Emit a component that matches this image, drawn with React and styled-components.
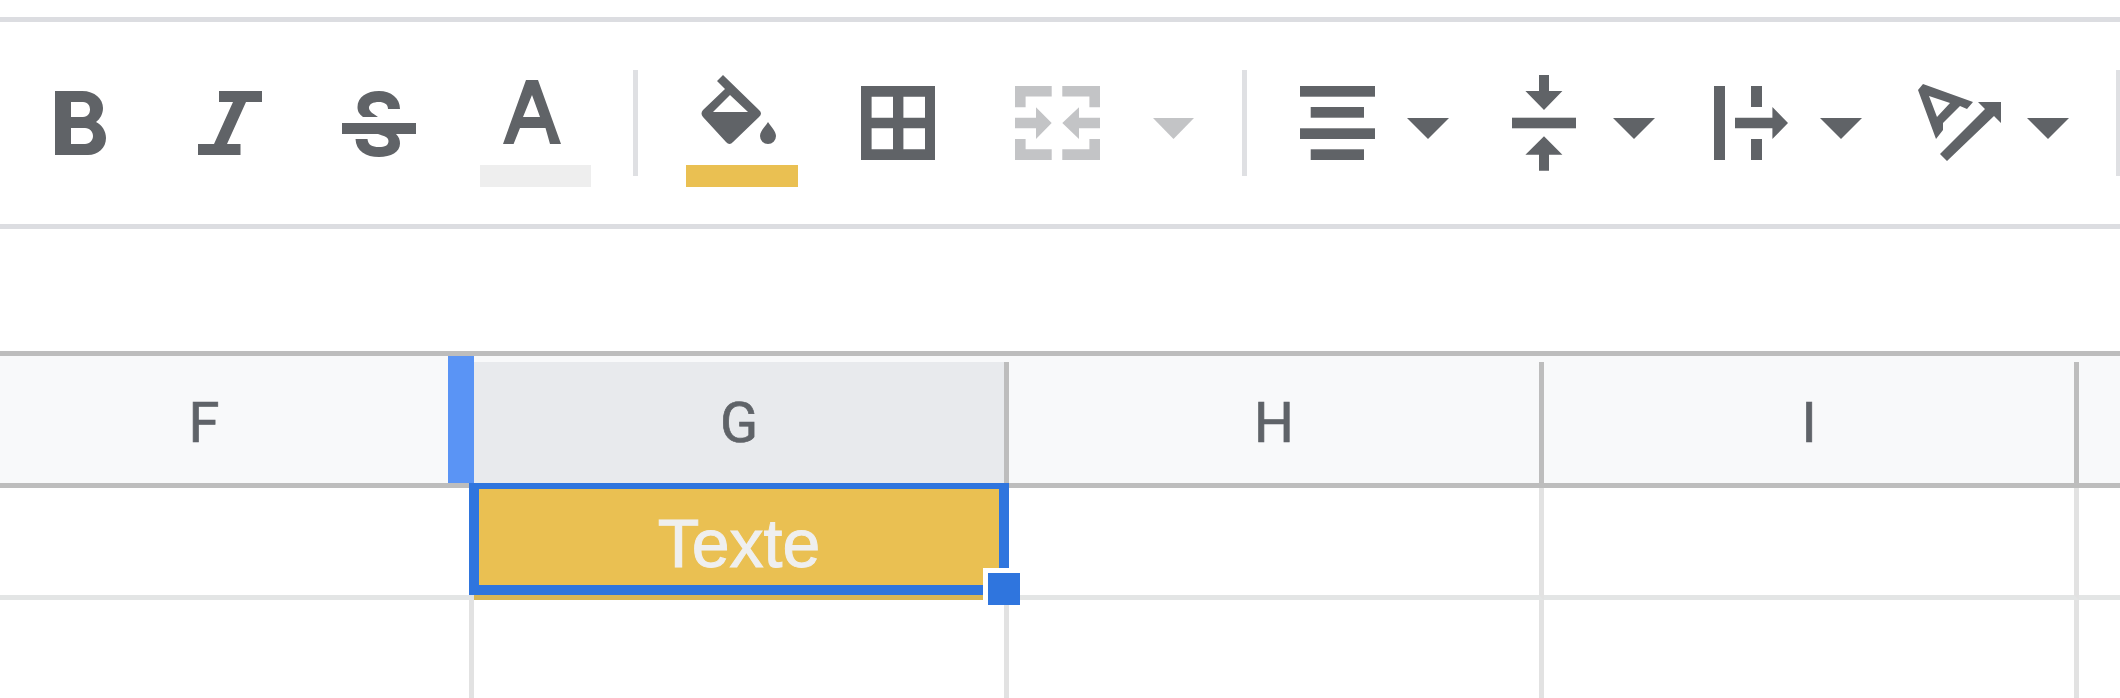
import React from 'react'
import styled, { createGlobalStyle } from 'styled-components'

const INK = '#606367'
const MUTED = '#c3c4c6'
const COLUMNS = ['F', 'G', 'H', 'I', '']

const Caret = ({ off }) => (
  <Glyph width={off ? 41 : 42} height={95} viewBox={off ? '0 0 41 95' : '0 0 42 95'}>
    <polygon fill={off ? MUTED : INK} points={off ? '0,48 41,48 20.5,69' : '0,48 42,48 21,69'} />
  </Glyph>
)

const BoldIcon = () => (
  <Glyph width={51} height={95} viewBox="0 0 51 95">
    <path
      fill={INK}
      fillRule="evenodd"
      d="M0 21H27C40 21 48 29 48 38C48 44 45 49 41 52C47 55 51 61 51 68C51 78 43 85 33 85H0ZM16 32V47H28C33 47 35 43 35 39.5C35 36 33 32 28 32ZM16 58V74H30C35 74 38 70 38 66C38 62 35 58 30 58Z"
    />
  </Glyph>
)

const ItalicIcon = () => (
  <Glyph width={64} height={95} viewBox="0 0 64 95">
    <polygon fill={INK} points="21,21 64,21 64,32 48,32 29,74 42.5,74 42.5,85 0,85 0,74 16,74 35,32 21,32" />
  </Glyph>
)

const StrikeIcon = () => (
  <Glyph width={74} height={95} viewBox="0 0 74 95">
    <g fill={INK}>
      <rect x="0" y="53" width="74" height="11" />
      <path d="M58 39H46C46 34 42 32 37 32C31 32 27 34 27 38C27 41 30 43 36 47H21C17 44 15.5 41 15.5 37C15.5 27 25 21 37 21C49 21 58 28 58 39Z" />
      <path d="M36 64H54C57 67 58 70 58 73.5C58 82 49 87 37 87C24 87 14 81 13.5 69H25.5C26 75 30 77 37 77C43 77 46.5 75.5 46.5 71C46.5 67 42 66 36 64Z" />
    </g>
  </Glyph>
)

const TextColorIcon = () => (
  <Glyph width={111} height={95} viewBox="0 0 111 95">
    <path
      transform="translate(23 0)"
      fill={INK}
      fillRule="evenodd"
      d="M23 10H35L58 74H47L42.5 58H17L10.6 74H0ZM29 25L20 47H37Z"
    />
  </Glyph>
)

const FillIcon = () => (
  <Glyph width={112} height={95} viewBox="0 0 112 95">
    <g transform="translate(15 0)" fill={INK}>
      <path
        fillRule="evenodd"
        d="M22 5L58 40Q62 43.500 58 47L32 72Q28.600 76 25 72L2 47Q-1 43.500 2 40L24 19L16 11ZM29 25L12 42H47Z"
      />
      <path d="M67 52C70 57 75 61 75 66A8 8 0 0 1 59 66C59 61 64 57 67 52Z" />
    </g>
  </Glyph>
)

const BordersIcon = () => (
  <Glyph width={74} height={95} viewBox="0 0 74 95">
    <path
      fill={INK}
      fillRule="evenodd"
      d="M0 16H74V90H0ZM10.600 26.700V47.700H32V26.700ZM42.400 26.700V47.700H64V26.700ZM10.600 58.300V79.300H32V58.300ZM42.400 58.300V79.300H64V58.300Z"
    />
  </Glyph>
)

const MergeIcon = () => (
  <Glyph width={85} height={95} viewBox="0 0 85 95">
    <g fill={MUTED}>
      <polygon points="0,16 36.700,16 36.700,26.600 10.600,26.600 10.600,37.300 0,37.300" />
      <polygon points="85,16 47.300,16 47.300,26.600 74.400,26.600 74.400,37.300 85,37.300" />
      <polygon points="0,69 10.600,69 10.600,79.300 36.700,79.300 36.700,90 0,90" />
      <polygon points="85,69 74.400,69 74.400,79.300 47.300,79.300 47.300,90 85,90" />
      <polygon points="0,47.700 21,47.700 21,37.300 36.700,53 21,69 21,58.300 0,58.300" />
      <polygon points="85,47.700 64,47.700 64,37.300 47.300,53 64,69 64,58.300 85,58.300" />
    </g>
  </Glyph>
)

const AlignIcon = () => (
  <Glyph width={75} height={95} viewBox="0 0 75 95">
    <g fill={INK}>
      <rect x="0" y="16" width="75" height="10.700" />
      <rect x="10.700" y="37" width="53.300" height="10.700" />
      <rect x="0" y="58.300" width="75" height="10.700" />
      <rect x="10.700" y="79.300" width="53.300" height="10.700" />
    </g>
  </Glyph>
)

const ValignIcon = () => (
  <Glyph width={64} height={105} viewBox="0 0 64 105">
    <g fill={INK}>
      <rect x="0" y="47.700" width="64" height="10.600" />
      <polygon points="27,5 37,5 37,21 50.400,21 32,40 13.400,21 27,21" />
      <polygon points="32,66.300 50.400,84.700 37,84.700 37,100.700 27,100.700 27,84.700 13.400,84.700" />
    </g>
  </Glyph>
)

const WrapIcon = () => (
  <Glyph width={74} height={95} viewBox="0 0 74 95">
    <g fill={INK}>
      <rect x="0" y="16" width="11" height="74" />
      <rect x="37" y="16" width="11" height="21" />
      <rect x="37" y="69" width="11" height="21" />
      <polygon points="21,47.700 58.400,47.700 58.400,37 74,53 58.400,69 58.400,58.300 21,58.300" />
    </g>
  </Glyph>
)

const RotateIcon = () => (
  <Glyph width={83} height={95} viewBox="0 0 83 95">
    <g fill={INK}>
      <path
        fillRule="evenodd"
        d="M0 20L5 14L55 32L49 39L42 36L25 53L25 60L18 69ZM11 26L19 47L32 33Z"
      />
      <polygon points="22,84 67,39 60,32 83,32 83,53 76,46 29,91" />
    </g>
  </Glyph>
)

const App = () => {
  return (
    <Page>
      <GlobalStyle />
      <Toolbar>
        <Slot><BoldIcon /></Slot>
        <Slot $gap={92}><ItalicIcon /></Slot>
        <Slot $gap={80}><StrikeIcon /></Slot>
        <Slot $gap={64}>
          <TextColorIcon />
          <ColorBar $color="#eeeeee" />
        </Slot>
        <Separator $gap={42} />
        <Slot $gap={48}>
          <FillIcon />
          <ColorBar $color="#eac052" />
        </Slot>
        <Slot $gap={63}><BordersIcon /></Slot>
        <Slot $gap={80}><MergeIcon /></Slot>
        <Slot $gap={53}><Caret off /></Slot>
        <Separator $gap={48} />
        <Slot $gap={53}><AlignIcon /></Slot>
        <Slot $gap={32}><Caret /></Slot>
        <Slot $gap={63}><ValignIcon /></Slot>
        <Slot $gap={37}><Caret /></Slot>
        <Slot $gap={59}><WrapIcon /></Slot>
        <Slot $gap={32}><Caret /></Slot>
        <Slot $gap={56}><RotateIcon /></Slot>
        <Slot $gap={26}><Caret /></Slot>
        <Separator $gap={47} />
      </Toolbar>

      <Sheet>
        <HeaderRow>
          {COLUMNS.map((name) => (
            <HeaderCell key={name || 'next'} $active={name === 'G'}>
              {name === 'G' && <ResizeBar />}
              <Letter>{name}</Letter>
            </HeaderCell>
          ))}
        </HeaderRow>
        <GridRow>
          {COLUMNS.map((name) => (
            <Cell key={name || 'next'} $filled={name === 'G'}>
              {name === 'G' && (
                <Selection>
                  <CellText>Texte</CellText>
                  <Handle />
                </Selection>
              )}
            </Cell>
          ))}
        </GridRow>
        <GridRow>
          {COLUMNS.map((name) => (
            <Cell key={name || 'next'} />
          ))}
        </GridRow>
      </Sheet>
    </Page>
  )
}

export default App

const GlobalStyle = createGlobalStyle`
html, body {
  margin: 0;
  background: #fff;
  overflow: hidden;
}
`

const Page = styled.div`
width: 2120px;
height: 698px;
padding-top: 17px;
box-sizing: border-box;
overflow: hidden;
background: #fff;
`

const Toolbar = styled.div`
display: flex;
align-items: flex-start;
height: 212px;
padding: 48px 0 0 55px;
box-sizing: border-box;
border-top: 5px solid #dcdde1;
border-bottom: 5px solid #dcdde1;
margin-bottom: 122px;
`

const Slot = styled.div`
display: flex;
flex: none;
flex-direction: column;
margin-left: ${(p) => p.$gap || 0}px;
`

const Glyph = styled.svg`
display: block;
flex: none;
`

const ColorBar = styled.div`
height: 22px;
background: ${(p) => p.$color};
`

const Separator = styled.div`
flex: none;
width: 5px;
height: 106px;
margin-left: ${(p) => p.$gap}px;
background: #dfe0e3;
`

const Sheet = styled.div`
margin-left: -61px;
border-top: 5px solid #bdbdbd;
`

const HeaderRow = styled.div`
display: grid;
grid-template-columns: repeat(5, 535px);
padding-top: 6px;
background: #f8f9fa;
border-bottom: 5px solid #bdbdbd;
`

const HeaderCell = styled.div`
position: relative;
display: flex;
align-items: center;
justify-content: center;
height: 121px;
box-sizing: border-box;
border-right: 5px solid #bdbdbd;
background: ${(p) => (p.$active ? '#e8eaed' : 'transparent')};
`

const ResizeBar = styled.div`
position: absolute;
top: -6px;
bottom: 0;
left: -26px;
width: 26px;
background: #5a94f5;
`

const Letter = styled.span`
font-family: Roboto, "Liberation Sans", sans-serif;
font-size: 56px;
font-weight: 400;
line-height: 1;
color: #5f6368;
-webkit-text-stroke: 0.7px #5f6368;
filter: blur(0.7px);
`

const GridRow = styled.div`
display: grid;
grid-template-columns: repeat(5, 535px);
height: 112px;
`

const Cell = styled.div`
position: relative;
box-sizing: border-box;
border-right: 5px solid #e2e2e2;
border-bottom: 5px solid ${(p) => (p.$filled ? '#d8b657' : '#e3e5e5')};
`

const Selection = styled.div`
position: absolute;
z-index: 2;
top: -5px;
left: -5px;
right: -5px;
bottom: 0;
display: flex;
align-items: center;
justify-content: center;
padding-top: 12px;
box-sizing: border-box;
border: 10px solid #2f75de;
border-top-width: 6px;
background: #eac052;
`

const CellText = styled.span`
font-family: "Liberation Sans", Arial, sans-serif;
font-size: 68px;
line-height: 1;
color: #efefef;
-webkit-text-stroke: 1px #efefef;
filter: blur(0.7px);
`

const Handle = styled.div`
position: absolute;
right: -21px;
bottom: -20px;
width: 32px;
height: 32px;
background: #2f75de;
border-top: 5px solid #fff;
border-left: 5px solid #fff;
`
